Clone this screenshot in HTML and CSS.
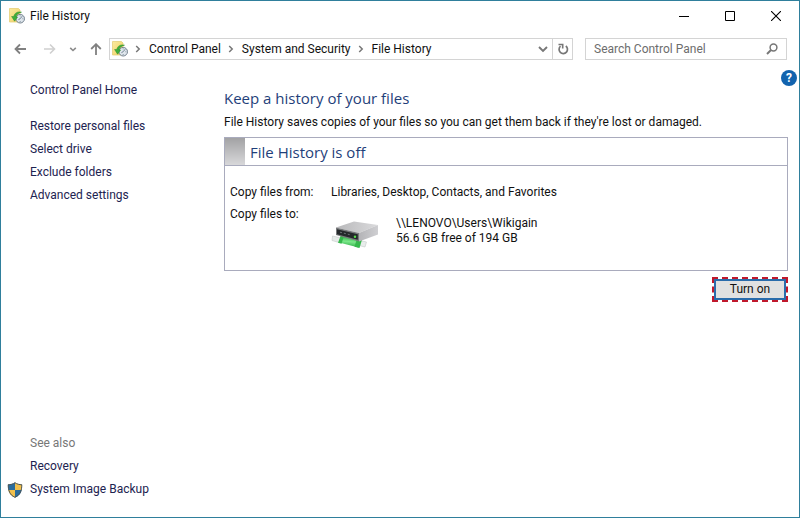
FILE: index.html
```html
<!DOCTYPE html>
<html lang="en">
<head>
  <meta charset="UTF-8">
  <meta name="viewport" content="width=device-width, initial-scale=1.0">
  <title>File History</title>
  <link rel="stylesheet" href="styles.css">
</head>
<body>
  <!-- Shared folder/clock icon -->
  <svg class="defs" width="0" height="0" aria-hidden="true">
    <defs>
      <linearGradient id="folder" x1="0" y1="0" x2="1" y2="1">
        <stop offset="0" stop-color="#fbeaa0"/>
        <stop offset="1" stop-color="#f0d060"/>
      </linearGradient>
      <symbol id="history" viewBox="0 0 16 16">
        <path d="M0.5 0.5h9l1.5 1.5v12h-10.500z" fill="url(#folder)" stroke="#e6cf7a" stroke-width="0.8"/>
        <circle cx="11.200" cy="10.700" r="4.300" fill="#dfe6ec" stroke="#74828e" stroke-width="1"/>
        <path d="M11.200 10.700l2-2.500M11.200 10.700l-1.800 1M11.200 7.500v.8M11.200 13.200v.8M14.300 10.700h-.8" stroke="#5b6f80" stroke-width="0.8" fill="none"/>
        <path d="M12.500 4.200C8.500 3.200 5.500 5 4.700 8.500H2.600L5.600 13.200 8.600 9H7C7.300 6.500 9.300 5 12.500 4.200z" fill="#3fae3a" stroke="#2a8a2c" stroke-width="0.5"/>
      </symbol>
    </defs>
  </svg>

  <div class="window">
    <header class="title-bar">
      <svg class="app-icon"><use href="#history"/></svg>
      <h1 class="title">File History</h1>
      <div class="window-buttons">
        <button aria-label="Minimize"><svg width="10" height="10"><path d="M0 5.500h10" stroke="#000"/></svg></button>
        <button aria-label="Maximize"><svg width="10" height="10"><path d="M.5.5h9v9h-9z" fill="none" stroke="#000"/></svg></button>
        <button aria-label="Close"><svg width="10" height="10"><path d="M0 0l10 10M10 0L0 10" stroke="#000" stroke-width="1.100"/></svg></button>
      </div>
    </header>

    <nav class="nav-bar">
      <div class="nav-buttons">
        <button aria-label="Back"><svg width="12" height="12"><path d="M12 6H1.500M6 1.500L1.500 6 6 10.500" fill="none" stroke="#808080" stroke-width="1.800"/></svg></button>
        <button aria-label="Forward"><svg width="12" height="12"><path d="M0 6h10.500M6 1.500L10.500 6 6 10.500" fill="none" stroke="#d0d0d0" stroke-width="1.600"/></svg></button>
        <button class="narrow" aria-label="Recent locations"><svg width="8" height="12"><path d="M1.200 4.800L4 7.500l2.800-2.700" fill="none" stroke="#8c8c8c" stroke-width="1.600"/></svg></button>
        <button aria-label="Up"><svg width="12" height="12"><path d="M6 12V1.500M1.200 6L6 1.200 10.800 6" fill="none" stroke="#808080" stroke-width="1.800"/></svg></button>
      </div>
      <div class="address">
        <svg class="app-icon"><use href="#history"/></svg>
        <svg class="crumb-arrow" width="6" height="8"><path d="M1.200 1L4.200 4l-3 3" fill="none" stroke="#777" stroke-width="1.500"/></svg>
        <a href="#">Control Panel</a>
        <svg class="crumb-arrow" width="6" height="8"><path d="M1.200 1L4.200 4l-3 3" fill="none" stroke="#777" stroke-width="1.500"/></svg>
        <a href="#">System and Security</a>
        <svg class="crumb-arrow" width="6" height="8"><path d="M1.200 1L4.200 4l-3 3" fill="none" stroke="#777" stroke-width="1.500"/></svg>
        <a href="#">File History</a>
        <button class="drop" aria-label="Previous locations"><svg width="10" height="8"><path d="M1 2l4 4 4-4" fill="none" stroke="#777" stroke-width="1.900"/></svg></button>
        <button class="refresh" aria-label="Refresh"><svg width="12" height="12"><path d="M8.800 3A4.200 4.200 0 1 1 3.500 3.200" fill="none" stroke="#777" stroke-width="1.700"/><path d="M1.500 1.500h4.200v4" fill="none" stroke="#777" stroke-width="1.600"/></svg></button>
      </div>
      <form class="search">
        <input type="text" aria-label="Search Control Panel" placeholder="Search Control Panel">
        <button type="button" aria-label="Search"><svg width="12" height="12"><circle cx="7.500" cy="4.500" r="3.400" fill="none" stroke="#777" stroke-width="1.500"/><path d="M5 7L1 11" stroke="#777" stroke-width="2"/></svg></button>
      </form>
    </nav>

    <div class="content">
      <aside class="sidebar">
        <a class="home" href="#">Control Panel Home</a>
        <a href="#">Restore personal files</a>
        <a href="#">Select drive</a>
        <a href="#">Exclude folders</a>
        <a href="#">Advanced settings</a>
        <div class="see-also">
          <span>See also</span>
          <a href="#">Recovery</a>
          <a class="shielded" href="#">
            <svg width="16" height="16" viewBox="0 0 16 16">
              <path d="M8 .5C6 2 3.500 2.500 1 2.500 1 8.500 2.500 13 8 15.500z" fill="#2b6c9c"/>
              <path d="M8 .5C10 2 12.500 2.500 15 2.500 15 8.500 13.500 13 8 15.500z" fill="#f2c04c"/>
              <path d="M8 8H1.300C2 11.500 4 14 8 15.500z" fill="#f2c04c"/>
              <path d="M8 8h6.700C14 11.500 12 14 8 15.500z" fill="#2b6c9c"/>
              <path d="M8 .7C6 2.200 3.500 2.700 1.200 2.700 1.200 8.500 2.700 13 8 15.300 13.300 13 14.800 8.500 14.800 2.700 12.500 2.700 10 2.200 8 .7z" fill="none" stroke="#4b5557"/>
            </svg>
            System Image Backup
          </a>
        </div>
      </aside>

      <main class="main">
        <button class="help" aria-label="Help">?</button>
        <h2>Keep a history of your files</h2>
        <p>File History saves copies of your files so you can get them back if they're lost or damaged.</p>

        <section class="panel">
          <h3>File History is off</h3>
          <dl>
            <dt>Copy files from:</dt>
            <dd>Libraries, Desktop, Contacts, and Favorites</dd>
            <dt>Copy files to:</dt>
            <dd class="drive">
              <!-- Network drive: box on a green pipe -->
              <svg width="48" height="32" viewBox="0 0 48 32">
                <defs>
                  <linearGradient id="top" x1="0" y1="0" x2="1" y2="0">
                    <stop offset="0" stop-color="#b8b8ba"/>
                    <stop offset="1" stop-color="#dadadc"/>
                  </linearGradient>
                  <linearGradient id="side" x1="0" y1="0" x2="1" y2="0">
                    <stop offset="0" stop-color="#b4b4b7"/>
                    <stop offset="1" stop-color="#cfcfd2"/>
                  </linearGradient>
                  <linearGradient id="pipe" x1="0.500" y1="0" x2="0.350" y2="1">
                    <stop offset="0" stop-color="#24a03a"/>
                    <stop offset=".5" stop-color="#7be88a"/>
                    <stop offset="1" stop-color="#27a840"/>
                  </linearGradient>
                </defs>
                <path d="M1.500 16l8 1.800-1.500 4.700-7-2z" fill="#e6ebe9" stroke="#c4cac8" stroke-width=".6"/>
                <path d="M29 20.500l6.500 1.500-1.500 5-6-1.500z" fill="#e8edeb" stroke="#c4cac8" stroke-width=".6"/>
                <path d="M10 15.500l20 4.500-2.500 7.500L8 22.500z" fill="url(#pipe)"/>
                <path d="M10 15l3 .7-2.500 8-3.500-1z" fill="#35b84b"/>
                <path d="M26 18.500l5 1.200-2.500 8.300-5-1.200z" fill="#35b84b"/>
                <path d="M5 7.500L23 1.500l24 3.500-19 8z" fill="url(#top)"/>
                <path d="M28 13L47 5v9.500L28 21.500z" fill="url(#side)"/>
                <path d="M5 7.500L28 13v8.500L5 15z" fill="#77797b"/>
                <path d="M6 9.200l20.800 5v5.500L6 14.200z" fill="#25292b"/>
                <path d="M9 12.200l11 2.800" stroke="#6c7477" stroke-dasharray="2 2"/>
                <circle cx="24" cy="16.800" r="1.200" fill="#58e04c"/>
              </svg>
              <div>\\LENOVO\Users\Wikigain<br>56.6 GB free of 194 GB</div>
            </dd>
          </dl>
        </section>

        <div class="actions">
          <div class="highlight"><button class="turn-on">Turn on</button></div>
        </div>
      </main>
    </div>
  </div>
</body>
</html>
```
FILE: styles.css
```css
* {
  margin: 0;
  padding: 0;
  box-sizing: border-box;
}

body {
  font-family: Roboto, "Open Sans", sans-serif;
  font-size: 12px;
  color: #111;
  background: #fff;
}

a {
  color: inherit;
  text-decoration: none;
}

button {
  font: inherit;
  background: none;
  border: none;
}

svg {
  display: block;
  flex: none;
}

.defs {
  position: absolute;
}

.window {
  display: flex;
  flex-direction: column;
  min-height: 100vh;
  border: 1px solid #2f7f9c;
}

.app-icon {
  width: 16px;
  height: 16px;
}

/* Title bar */
.title-bar {
  display: flex;
  align-items: center;
  height: 30px;
  padding-left: 8px;
}

.title {
  flex: 1;
  margin-left: 5px;
  font-size: 12px;
  font-weight: normal;
}

.window-buttons {
  display: flex;
}

.window-buttons button {
  display: flex;
  align-items: center;
  justify-content: center;
  width: 46px;
  height: 30px;
}

/* Navigation */
.nav-bar {
  display: flex;
  align-items: center;
  height: 36px;
  padding: 0 12px 0 7px;
}

.nav-buttons {
  display: flex;
  align-items: center;
}

.nav-buttons button {
  display: flex;
  justify-content: center;
  width: 24px;
}

.nav-buttons button + button {
  margin-left: 6px;
}

.nav-buttons .narrow {
  width: 10px;
}

.address,
.search {
  display: flex;
  align-items: center;
  height: 22px;
  border: 1px solid #d4d4d4;
}

.address {
  flex: 1;
  margin: 0 12px 0 1px;
  padding-left: 2px;
}

.crumb-arrow {
  margin: 0 8px 0 7px;
}

.drop {
  margin-left: auto;
  padding: 0 4px;
}

.refresh {
  display: flex;
  align-items: center;
  justify-content: center;
  width: 20px;
  height: 20px;
  border-left: 1px solid #d4d4d4;
}

.search {
  width: 202px;
  padding: 0 8px;
}

.search input {
  flex: 1;
  min-width: 0;
  font: inherit;
  border: none;
  outline: none;
}

.search input::placeholder {
  color: #6d6d6d;
}

/* Page content */
.content {
  display: flex;
  flex: 1;
}

.sidebar {
  display: flex;
  flex-direction: column;
  width: 223px;
  padding: 12px 6px 16px 29px;
  line-height: 23px;
  color: #1d2350;
}

.home {
  margin-bottom: 13px;
}

.see-also {
  display: flex;
  flex-direction: column;
  margin-top: auto;
}

.see-also span {
  color: #777;
}

.shielded {
  display: flex;
  align-items: center;
  gap: 7px;
  margin-left: -23px;
}

.main {
  position: relative;
  flex: 1;
  padding: 19px 11px 16px 0;
}

.help {
  position: absolute;
  top: 3px;
  right: 2px;
  width: 16px;
  height: 16px;
  line-height: 16px;
  font-weight: bold;
  color: #fff;
  background: #1263ae;
  border-radius: 50%;
}

h2,
h3 {
  font-family: "Open Sans", sans-serif;
  font-size: 15px;
  font-weight: normal;
  color: #1f3f7a;
}

h2 {
  line-height: 24px;
}

.main p {
  margin-bottom: 3px;
  line-height: 24px;
}

.panel {
  border: 1px solid #a9abbd;
}

.panel h3 {
  display: flex;
  align-items: center;
  height: 28px;
  border-bottom: 1px solid #a9abbd;
}

.panel h3::before {
  content: "";
  width: 20px;
  height: 100%;
  margin-right: 5px;
  background: linear-gradient(#a2a2a4, #d8d8da);
}

dl {
  display: grid;
  grid-template-columns: 101px 1fr;
  padding: 15px 5px 18px;
  line-height: 22px;
}

.drive {
  display: flex;
  gap: 17px;
  padding-top: 13px;
  line-height: 15px;
}

.drive svg {
  margin-top: 4px;
}

/* Turn on button */
.actions {
  display: flex;
  justify-content: flex-end;
  margin-top: 6px;
}

.highlight {
  border: 2px dashed #c0182c;
}

.turn-on {
  display: block;
  width: 72px;
  height: 21px;
  line-height: 17px;
  color: #111;
  background: #e1e1e1;
  border: 2px solid #2a6cab;
}
```
